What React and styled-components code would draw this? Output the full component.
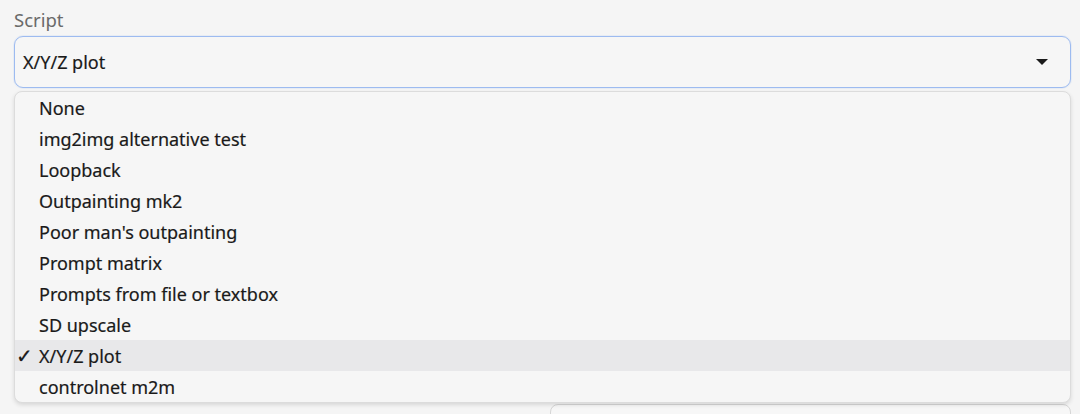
import React from "react";
import styled, { createGlobalStyle } from "styled-components";

const Global = createGlobalStyle`
  html, body { margin: 0; padding: 0; background: #f5f5f5; }
  body { font-family: "Noto Sans", "Open Sans", sans-serif; color: #1a1a1a; }
`;

const Page = styled.div`
  width: 1080px;
  height: 414px;
  overflow: hidden;
  box-sizing: border-box;
  padding: 7px 9px 0 14px;
  position: relative;
`;

const Label = styled.div`
  font-size: 18.5px;
  color: #6a6a6a;
  height: 29px;
  line-height: 26px;
`;

const Select = styled.div`
  box-sizing: border-box;
  height: 52px;
  border: 1.5px solid #9dbbf0;
  border-radius: 9px;
  background: #f6f6f6;
  display: flex;
  align-items: center;
  justify-content: space-between;
  padding: 0 22px 0 8px;
  font-size: 18px;
  -webkit-text-stroke: 0.2px currentColor;
  box-shadow: 0 0 0 1px rgba(157, 187, 240, 0.15);
`;

const Caret = styled.span`
  width: 0;
  height: 0;
  border-left: 6px solid transparent;
  border-right: 6px solid transparent;
  border-top: 6px solid #1a1a1a;
`;

const Behind = styled.div`
  display: grid;
  grid-template-columns: 536px 1fr;
  margin-top: 316px;
`;

const BackBox = styled.div`
  grid-column: 2;
  height: 40px;
  border: 1px solid #d6d6d6;
  border-radius: 8px;
  background: #f7f7f7;
`;

const Menu = styled.ul`
  position: absolute;
  left: 14px;
  top: 91px;
  width: 1057px;
  margin: 0;
  padding: 0;
  list-style: none;
  box-sizing: border-box;
  background: #f6f6f6;
  border: 1px solid #dcdcdc;
  border-radius: 8px;
  box-shadow: 0 2px 4px rgba(0, 0, 0, 0.12);
  overflow: hidden;
  z-index: 2;
`;

const Item = styled.li`
  height: 31px;
  display: flex;
  align-items: center;
  font-size: 18px;
  -webkit-text-stroke: 0.2px currentColor;
  padding-left: 24px;
  position: relative;
  background: ${(p) => (p.$selected ? "#e8e8ea" : "transparent")};
`;

const Check = styled.span`
  position: absolute;
  left: 1px;
  font-size: 20px;
  font-family: "DejaVu Sans", sans-serif;
`;

const options = [
  "None",
  "img2img alternative test",
  "Loopback",
  "Outpainting mk2",
  "Poor man's outpainting",
  "Prompt matrix",
  "Prompts from file or textbox",
  "SD upscale",
  "X/Y/Z plot",
  "controlnet m2m",
];

export default function App() {
  const selected = "X/Y/Z plot";
  return (
    <>
      <Global />
      <Page>
        <Label>Script</Label>
        <Select>
          <span>{selected}</span>
          <Caret />
        </Select>
        <Behind>
          <BackBox />
        </Behind>
        <Menu>
          {options.map((o) => (
            <Item key={o} $selected={o === selected}>
              {o === selected && <Check>✓</Check>}
              {o}
            </Item>
          ))}
        </Menu>
      </Page>
    </>
  );
}
